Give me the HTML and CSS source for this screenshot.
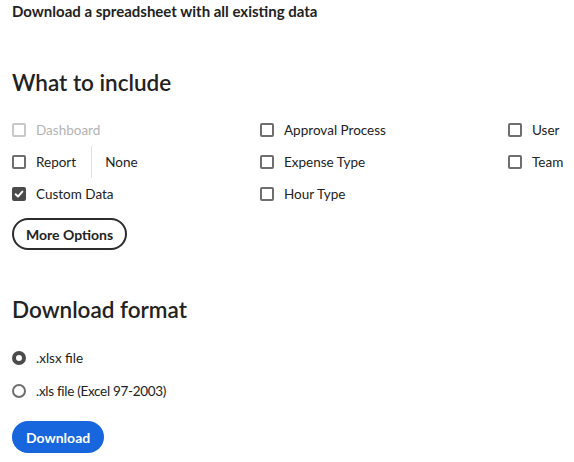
FILE: index.html
```html
<!DOCTYPE html>
<html lang="en">
<head>
<meta charset="utf-8">
<title>Download</title>
<link rel="stylesheet" href="styles.css">
</head>
<body>
<main class="page">
  <p class="intro">Download a spreadsheet with all existing data</p>

  <h2 class="heading heading-include">What to include</h2>
  <div class="options">
    <label class="check disabled"><span class="box"></span><span>Dashboard</span></label>
    <label class="check"><span class="box"></span><span>Approval Process</span></label>
    <label class="check"><span class="box"></span><span>User</span></label>

    <div class="report-row">
      <label class="check"><span class="box"></span><span>Report</span></label>
      <span class="divider"></span>
      <span class="none">None</span>
    </div>
    <label class="check"><span class="box"></span><span>Expense Type</span></label>
    <label class="check"><span class="box"></span><span>Team</span></label>

    <label class="check"><span class="box checked"><svg viewBox="0 0 10 10" width="10" height="10"><path d="M1.6 5.2 L4 7.5 L8.4 2.6" fill="none" stroke="#fff" stroke-width="1.9" stroke-linecap="round" stroke-linejoin="round"/></svg></span><span>Custom Data</span></label>
    <label class="check"><span class="box"></span><span>Hour Type</span></label>
    <span></span>
  </div>
  <button class="btn-outline">More Options</button>

  <h2 class="heading heading-format">Download format</h2>
  <div class="radios">
    <label class="radio"><span class="dot selected"></span><span>.xlsx file</span></label>
    <label class="radio"><span class="dot"></span><span class="narrow">.xls file (Excel 97-2003)</span></label>
  </div>
  <button class="btn-primary">Download</button>
</main>
</body>
</html>
```

FILE: styles.css
```css
* { box-sizing: border-box; }
html, body { margin: 0; padding: 0; background: #fff; }
body {
  font-family: Lato, "Noto Sans", sans-serif;
  color: #222;
  font-size: 13.5px;
}
.page {
  padding: 2px 12px 0 12px;
}
.intro {
  margin: 0;
  font-weight: 700;
  font-size: 15px;
  line-height: 18px;
  color: #222;
}
.heading {
  margin: 0;
  font-weight: 600;
  font-size: 22.5px;
  line-height: 28px;
  color: #222;
}
.heading-include { margin-top: 49px; }
.heading-format { margin-top: 46px; }

.options {
  margin-top: 17px;
  display: grid;
  grid-template-columns: 248px 248px 1fr;
  grid-auto-rows: 32px;
}
.check {
  display: flex;
  align-items: center;
  gap: 10px;
  height: 32px;
  color: #222;
}
.check.disabled { color: #b3b3b3; }
.box {
  width: 14px;
  height: 14px;
  border: 2px solid #6e6e6e;
  border-radius: 2px;
  display: flex;
  align-items: center;
  justify-content: center;
  flex: none;
}
.check.disabled .box { border-color: #c8c8c8; }
.box.checked { background: #4b4b4b; border-color: #4b4b4b; }
.report-row {
  display: flex;
  align-items: center;
  height: 32px;
}
.divider {
  width: 1px;
  height: 32px;
  background: #e1e1e1;
  margin-left: 15px;
  margin-right: 13px;
}
.none { color: #222; }

.btn-outline {
  margin-top: 8px;
  height: 32px;
  padding: 0 12px;
  border: 2px solid #2c2c2c;
  border-radius: 16px;
  background: #fff;
  font-family: inherit;
  font-weight: 700;
  font-size: 14px;
  color: #222;
}

.radios {
  margin-top: 17px;
  display: flex;
  flex-direction: column;
}
.radio {
  display: flex;
  align-items: center;
  gap: 10px;
  height: 33px;
}
.narrow { letter-spacing: -0.3px; }
.dot {
  width: 14px;
  height: 14px;
  border-radius: 50%;
  border: 2px solid #6e6e6e;
  flex: none;
}
.dot.selected { border: 4px solid #4b4b4b; }

.btn-primary {
  margin-top: 14px;
  height: 32px;
  padding: 0 14px;
  border: none;
  border-radius: 16px;
  background: #1866dd;
  color: #fff;
  font-family: inherit;
  font-weight: 700;
  font-size: 14px;
}
```
